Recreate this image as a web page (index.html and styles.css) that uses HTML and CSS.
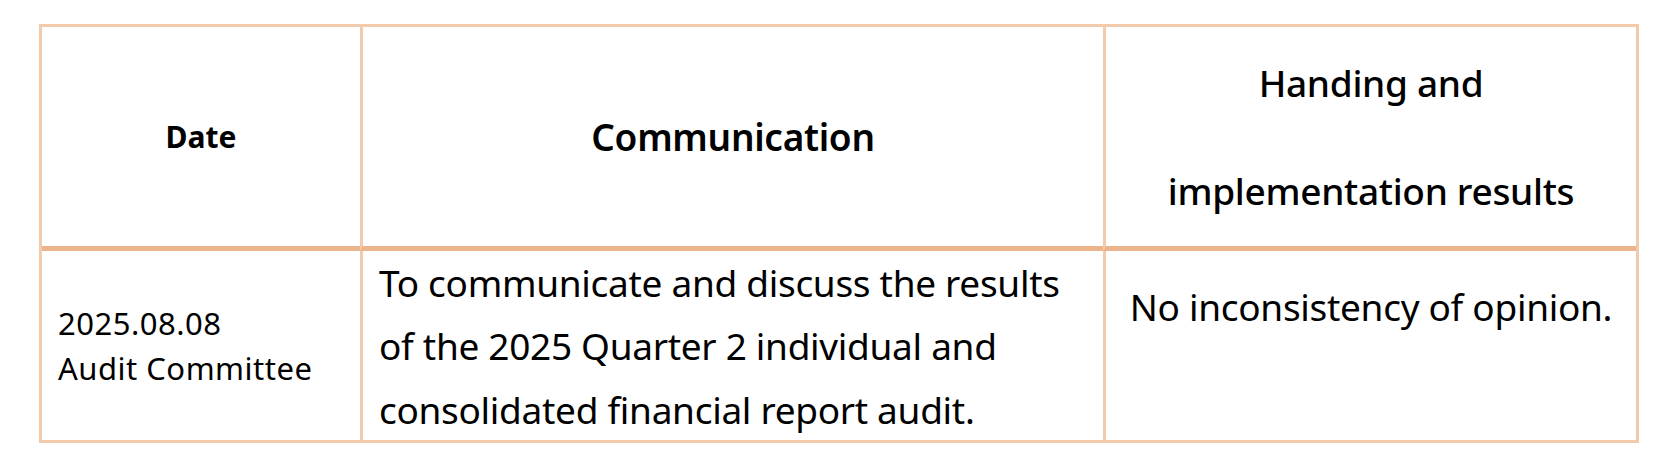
FILE: index.html
```html
<!DOCTYPE html>
<html lang="en">
<head>
<meta charset="utf-8">
<title>Audit Committee Communication</title>
<link rel="stylesheet" href="styles.css">
</head>
<body>
<div class="sheet">
  <div class="cell head head-date">Date</div>
  <div class="cell head head-comm">Communication</div>
  <div class="cell head head-result">Handing and<br>implementation results</div>
  <div class="cell body-date">2025.08.08<br>Audit Committee</div>
  <div class="cell body-comm">To communicate and discuss the results of the 2025 Quarter 2 individual and consolidated financial report audit.</div>
  <div class="cell body-result">No inconsistency of opinion.</div>
</div>
</body>
</html>
```

FILE: styles.css
```css
html, body {
  margin: 0;
  padding: 0;
  background: #ffffff;
}

body {
  font-family: "Noto Sans", "Open Sans", "DejaVu Sans", sans-serif;
  color: #000000;
}

.sheet {
  box-sizing: border-box;
  margin: 24px 0 0 39px;
  width: 1600px;
  display: grid;
  grid-template-columns: 318px 743px 533px;
  grid-template-rows: 224px 189px;
  border: 3px solid #f1cbab;
}

.cell {
  box-sizing: border-box;
  display: flex;
  align-items: center;
}

.cell + .cell {
  border-left: 3px solid #f1cbab;
}

.body-date {
  border-left: none !important;
}

.head {
  border-bottom: 5px solid #ecb48b;
  justify-content: center;
  text-align: center;
}

.head-date {
  font-size: 30px;
  font-weight: 700;
}

.head-comm {
  font-size: 37px;
  font-weight: 600;
  letter-spacing: -0.3px;
}

.head-result {
  font-size: 37px;
  font-weight: 500;
  letter-spacing: -0.3px;
  line-height: 108px;
}

.body-date {
  font-size: 31px;
  letter-spacing: 0.5px;
  line-height: 45px;
  padding-left: 16px;
}

.body-comm {
  font-size: 37px;
  letter-spacing: -0.3px;
  line-height: 63.3px;
  padding: 0 16px;
  align-items: flex-start;
}

.body-result {
  font-size: 37px;
  letter-spacing: -0.3px;
  line-height: 63.3px;
  padding: 24px 16px 0;
  align-items: flex-start;
  justify-content: center;
  text-align: center;
}
```
